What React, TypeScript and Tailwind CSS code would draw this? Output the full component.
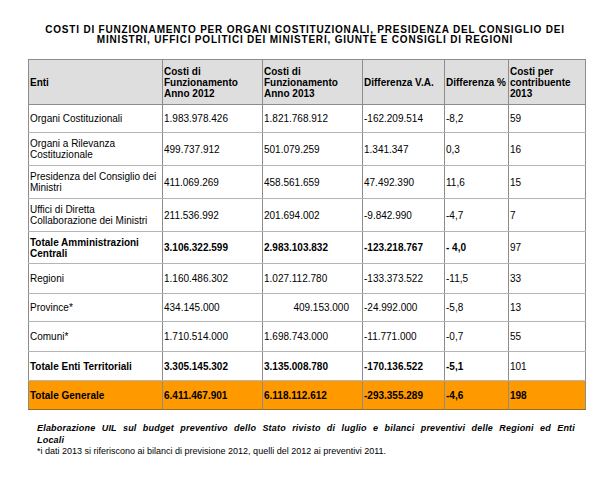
const rows = [
  { h: 'h-[28px]', cells: ['Organi Costituzionali', '1.983.978.426', '1.821.768.912', '-162.209.514', '-8,2', '59'] },
  { h: 'h-[33px]', cells: ['Organi a Rilevanza Costituzionale', '499.737.912', '501.079.259', '1.341.347', '0,3', '16'] },
  { h: 'h-[33px]', cells: ['Presidenza del Consiglio dei Ministri', '411.069.269', '458.561.659', '47.492.390', '11,6', '15'] },
  { h: 'h-[33px]', cells: ['Uffici di Diretta Collaborazione dei Ministri', '211.536.992', '201.694.002', '-9.842.990', '-4,7', '7'] },
  { h: 'h-[32px]', bold: true, cells: ['Totale Amministrazioni Centrali', '3.106.322.599', '2.983.103.832', '-123.218.767', '- 4,0', '97'] },
  { h: 'h-[30px]', cells: ['Regioni', '1.160.486.302', '1.027.112.780', '-133.373.522', '-11,5', '33'] },
  { h: 'h-[28px]', cells: ['Province*', '434.145.000', '409.153.000', '-24.992.000', '-5,8', '13'], shifted: true },
  { h: 'h-[30px]', cells: ['Comuni*', '1.710.514.000', '1.698.743.000', '-11.771.000', '-0,7', '55'] },
  { h: 'h-[29px]', bold: true, cells: ['Totale Enti Territoriali', '3.305.145.302', '3.135.008.780', '-170.136.522', '-5,1', '101'] },
];

const widths = ['w-[134px]', 'w-[100px]', 'w-[100px]', 'w-[82px]', 'w-[64px]', 'w-[77px]'];

export default function App() {
  return (
    <div className="h-[482px] w-[610px] bg-white font-['Liberation_Sans',Arial,sans-serif] text-black">
      <h1 className="pt-[25px] text-center text-[10px] font-bold leading-[10px] tracking-[0.8px]">
        COSTI DI FUNZIONAMENTO PER ORGANI COSTITUZIONALI, PRESIDENZA DEL CONSIGLIO DEI
        <br />
        MINISTRI, UFFICI POLITICI DEI MINISTERI, GIUNTE E CONSIGLI DI REGIONI
      </h1>

      <table className="ml-[28px] mt-[14px] w-[557px] table-fixed border-collapse text-[10px] leading-[11px]">
        <colgroup>
          {widths.map((w, i) => (
            <col key={i} className={w} />
          ))}
        </colgroup>
        <thead>
          <tr className="h-[45px] bg-[#dedede] text-left font-bold">
            <th className="border border-[#8c8c8c] pl-[1px] font-bold">Enti</th>
            <th className="border border-[#8c8c8c] pl-[1px] font-bold">
              Costi di
              <br />
              Funzionamento
              <br />
              Anno 2012
            </th>
            <th className="border border-[#8c8c8c] pl-[1px] font-bold">
              Costi di
              <br />
              Funzionamento
              <br />
              Anno 2013
            </th>
            <th className="border border-[#8c8c8c] pl-[1px] font-bold">Differenza V.A.</th>
            <th className="border border-[#8c8c8c] pl-[1px] font-bold">Differenza %</th>
            <th className="border border-[#8c8c8c] pl-[1px] font-bold">
              Costi per
              <br />
              contribuente
              <br />
              2013
            </th>
          </tr>
        </thead>
        <tbody>
          {rows.map((r, ri) => (
            <tr key={ri} className={r.h}>
              {r.cells.map((c, ci) => (
                <td
                  key={ci}
                  className={
                    'border-x border-b border-x-[#8c8c8c] border-b-[#b4b4b4] pl-[1px] align-middle ' +
                    (r.bold && ci < 5 ? 'font-bold ' : '') +
                    (r.shifted && ci === 2 ? 'pr-[13px] text-right' : '')
                  }
                >
                  {c}
                </td>
              ))}
            </tr>
          ))}
          <tr className="h-[29px] bg-[#ff9900] font-bold">
            {['Totale Generale', '6.411.467.901', '6.118.112.612', '-293.355.289', '-4,6', '198'].map((c, ci) => (
              <td key={ci} className="border border-x-[#8c8c8c] border-b-[#9a6a2a] border-t-[#b4b4b4] pl-[1px] align-middle">
                {c}
              </td>
            ))}
          </tr>
        </tbody>
      </table>

      <div className="ml-[37px] mt-[12px] w-[538px]">
        <p className="text-justify text-[9px] font-bold italic leading-[12px] tracking-[0.2px] [text-align-last:justify]">
          Elaborazione UIL sul budget preventivo dello Stato rivisto di luglio e bilanci preventivi delle Regioni ed Enti
        </p>
        <p className="text-[9px] font-bold italic leading-[12px] tracking-[0.2px]">Locali</p>
        <p className="text-[9px] leading-[10px]">
          *i dati 2013 si riferiscono ai bilanci di previsione 2012, quelli del 2012 ai preventivi 2011.
        </p>
      </div>
    </div>
  );
}
